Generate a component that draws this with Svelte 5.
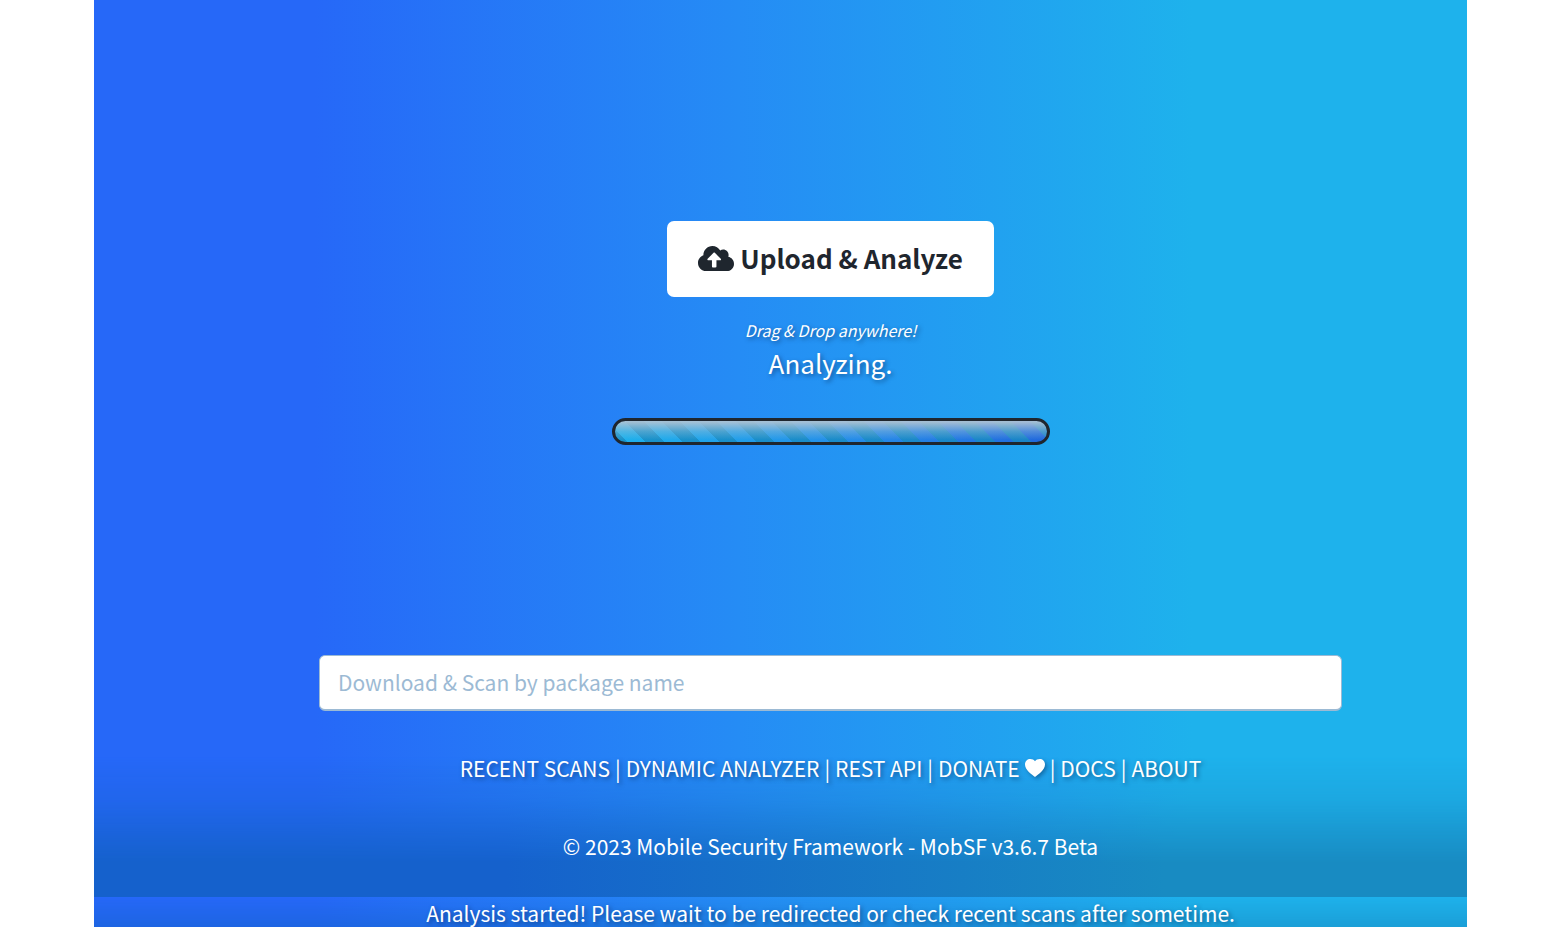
<script>
  const links = ['RECENT SCANS', 'DYNAMIC ANALYZER', 'REST API', 'DONATE', 'DOCS', 'ABOUT'];
  let packageName = $state('');
</script>

<div class="page">
  <main class="hero">
    <div class="upload">
      <button type="button" class="upload-button">
        <svg class="cloud" viewBox="0 0 640 512" aria-hidden="true">
          <path d="M537.6 226.600c4.100-10.700 6.400-22.400 6.400-34.600 0-53-43-96-96-96-19.700 0-38.100 6-53.300 16.200C367 64.200 315.300 32 256 32c-88.400 0-160 71.600-160 160 0 2.700.1 5.400.2 8.100C40.200 219.800 0 273.200 0 336c0 79.500 64.500 144 144 144h368c70.700 0 128-57.300 128-128 0-61.900-44-113.600-102.400-125.400zM393.400 288H328v112c0 8.800-7.200 16-16 16h-48c-8.800 0-16-7.200-16-16V288h-65.400c-14.300 0-21.400-17.200-11.300-27.300l105.400-105.400c6.200-6.200 16.400-6.200 22.600 0l105.400 105.400c10.100 10.100 2.900 27.300-11.300 27.300z" />
        </svg>
        Upload &amp; Analyze
      </button>
      <em class="hint">Drag &amp; Drop anywhere!</em>
      <p class="status">Analyzing.</p>
      <div class="progress" role="progressbar" aria-label="Analysis progress"></div>
    </div>

    <form class="search">
      <input type="text" aria-label="Package name" placeholder="Download & Scan by package name" bind:value={packageName} />
    </form>

    <nav>
      {#each links as link, i}
        {#if i > 0}<span class="bar">|</span>{/if}
        <a href="#top">{link}{#if link === 'DONATE'}<svg class="heart" viewBox="0 0 20 18" aria-hidden="true"><path d="M10 18C7 15.500 0 11 0 5.500 0 2 2.500 0 5.300 0 7.300 0 9 .8 10 2.200 11 .8 12.700 0 14.700 0 17.500 0 20 2 20 5.500 20 11 13 15.500 10 18z" /></svg>{/if}</a>
      {/each}
    </nav>

    <footer>© 2023 Mobile Security Framework - MobSF v3.6.7 Beta</footer>
  </main>
  <p class="notice">Analysis started! Please wait to be redirected or check recent scans after sometime.</p>
</div>

<style>
  :global(body) {
    margin: 0;
    background: #fff;
  }

  .page {
    --sky: linear-gradient(90deg, #2668f8 16%, #258cf5 47%, #1eb2ec 80%);
    --shade: linear-gradient(90deg, #1561cc 30%, #188bc2 78%);
    box-sizing: border-box;
    height: 100vh;
    margin: 0 6%;
    overflow: hidden;
    color: #fff;
    font-family: "Noto Sans CJK JP", "Noto Sans", sans-serif;
    font-size: 21px;
    line-height: 30px;
    text-shadow: 2px 2px 4px rgba(0, 30, 70, 0.5);
  }

  .hero,
  .notice {
    position: relative;
    isolation: isolate;
    box-sizing: border-box;
    padding-left: 100px;
    background: var(--sky);
    text-align: center;
  }

  .hero::before,
  .notice::before {
    content: "";
    position: absolute;
    z-index: -1;
    inset: auto 0 0;
    height: 140px;
    background: var(--shade);
    mask-image: linear-gradient(transparent, rgba(0, 0, 0, 0.25) 30%, #000 75%);
  }

  .notice::before {
    height: 30px;
    mask-image: linear-gradient(transparent, rgba(0, 0, 0, 0.5));
  }

  .hero {
    display: flex;
    flex-direction: column;
    align-items: center;
    min-height: calc(100vh - 30px);
    padding-top: 221px;
    padding-bottom: 36px;
  }

  .upload {
    display: flex;
    flex-direction: column;
    align-items: center;
  }

  .upload-button {
    display: flex;
    align-items: center;
    gap: 6px;
    height: 76px;
    padding: 0 31px 2px;
    border: 0;
    border-radius: 7px;
    background: #fff;
    color: #1f262e;
    font: bold 26px/36px "Noto Sans CJK JP", "Noto Sans", sans-serif;
  }

  .cloud {
    width: 36px;
    height: 29px;
    fill: currentColor;
  }

  .hint {
    margin-top: 21px;
    font-size: 16px;
    line-height: 24px;
  }

  .status {
    margin: 3px 0 0;
    font-size: 26px;
    line-height: 36px;
  }

  .progress {
    box-sizing: border-box;
    width: 438px;
    height: 27px;
    margin-top: 37px;
    border: 3px solid #1f262e;
    border-radius: 14px;
    background:
      linear-gradient(rgba(178, 196, 212, 0.9) 15%, rgba(150, 190, 215, 0.4) 50%, transparent 80%),
      repeating-linear-gradient(45deg, rgba(24, 139, 194, 0.8) 0 13px, transparent 13px 26px),
      linear-gradient(90deg, #1eb2ec, #2589e8 60%, #2168dc);
    background-origin: border-box;
  }

  .search {
    display: flex;
    width: 81%;
    max-width: 1023px;
    margin: auto 0 0;
  }

  .search input {
    box-sizing: border-box;
    flex: 1;
    height: 56px;
    padding: 0 18px 2px;
    border: 1px solid #9cbad4;
    border-bottom-width: 2px;
    border-radius: 6px;
    background: #fff;
    color: #1f262e;
    font: inherit;
    text-shadow: none;
  }

  .search input::placeholder {
    color: #9cbad4;
    opacity: 1;
  }

  nav {
    display: flex;
    gap: 5px;
    margin-top: 42px;
  }

  a {
    color: inherit;
    text-decoration: none;
  }

  .heart {
    width: 20px;
    height: 18px;
    margin-left: 5px;
    fill: currentColor;
    filter: drop-shadow(2px 2px 2px rgba(0, 30, 70, 0.4));
  }

  footer {
    margin-top: 48px;
    text-shadow: none;
  }

  .notice {
    height: 30px;
    margin: 0;
    line-height: 32px;
  }
</style>
